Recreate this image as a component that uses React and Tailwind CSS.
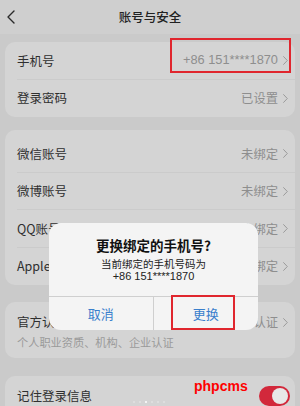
const font = { fontFamily: '"Noto Sans CJK SC", "Noto Sans", sans-serif' };

function Chevron({ className = 'w-[5px] h-[9px]', color = '#9a9a9a' }) {
  return (
    <svg viewBox="0 0 5 9" className={className} fill="none">
      <path d="M0.6 0.6 L4.3 4.5 L0.6 8.4" stroke={color} strokeWidth="1" strokeLinecap="round" strokeLinejoin="round" />
    </svg>
  );
}

function Row({ label, value, last, digits }) {
  return (
    <div className="relative h-[37.5px] flex items-center pl-[12px] pr-[7px]">
      <span className="flex-1 text-[12.5px] text-[#2f2f2f] leading-none">{label}</span>
      <span
        className={`${digits ? 'text-[12.8px]' : 'text-[12.3px]'} text-[#8e8e8e] leading-none mr-[5px]`}
        style={digits ? { fontFamily: '"Liberation Sans", Arial, sans-serif' } : undefined}
      >
        {value}
      </span>
      <Chevron />
      {!last && <div className="absolute left-[12px] right-0 bottom-0 h-px bg-[#cbcbcb]" />}
    </div>
  );
}

export default function App() {
  return (
    <div className="relative w-[300px] h-[406px] overflow-hidden bg-[#cacaca]" style={font}>
      {/* header */}
      <div className="h-[34px] grid grid-cols-[40px_1fr_40px] items-center bg-[#cfcfcf]">
        <div className="pl-[7px] flex items-center">
          <svg viewBox="0 0 8 14" className="w-[8px] h-[14px]" fill="none">
            <path d="M7 1 L1 7 L7 13" stroke="#2a2a2a" strokeWidth="1.4" strokeLinecap="round" strokeLinejoin="round" />
          </svg>
        </div>
        <div className="text-center text-[12.5px] font-medium text-[#222]">账号与安全</div>
        <div />
      </div>

      {/* card 1 */}
      <div className="mt-[8px] mx-[5px] rounded-[10px] bg-[#d4d4d4]">
        <Row label="手机号" value="+86 151****1870" digits />
        <Row label="登录密码" value="已设置" last />
      </div>

      {/* card 2 */}
      <div className="mt-[13px] mx-[5px] rounded-[10px] bg-[#d4d4d4] pt-[5px]">
        <Row label="微信账号" value="未绑定" />
        <Row label="微博账号" value="未绑定" />
        <Row label="QQ账号" value="未绑定" />
        <Row label="Apple ID" value="未绑定" last />
      </div>

      {/* card 3 */}
      <div className="mt-[17px] mx-[5px] rounded-[10px] bg-[#d4d4d4] pt-[10px] pb-[7px] pl-[12px] pr-[7px]">
        <div className="h-[20px] flex items-center">
          <span className="flex-1 text-[12.5px] text-[#2f2f2f] leading-none">官方认证</span>
          <span className="text-[12.3px] text-[#8e8e8e] leading-none mr-[5px]">未认证</span>
          <Chevron />
        </div>
        <div className="mt-[3px] h-[16px] flex items-center text-[11.2px] text-[#9a9a9a] leading-none">
          个人职业资质、机构、企业认证
        </div>
      </div>

      {/* card 4 */}
      <div className="mt-[18px] mx-[5px] rounded-[10px] bg-[#d4d4d4] h-[40px] flex items-start pt-[10px] pl-[12px] pr-[5px]">
        <span className="flex-1 text-[12.5px] text-[#2f2f2f] leading-[20px]">记住登录信息</span>
        <div className="w-[31px] h-[20px] rounded-full bg-[#d2283b] flex items-center justify-end pr-[2px]">
          <div className="w-[16px] h-[16px] rounded-full bg-[#e8e8e8]" />
        </div>
      </div>

      {/* page dots */}
      <div className="absolute left-[133px] top-[401px] flex gap-[4px]">
        <div className="w-[2px] h-[2px] rounded-full bg-[#e2e2e2]" />
        <div className="w-[2px] h-[2px] rounded-full bg-[#e2e2e2]" />
        <div className="w-[2px] h-[2px] rounded-full bg-[#ffffff]" />
        <div className="w-[2px] h-[2px] rounded-full bg-[#e2e2e2]" />
        <div className="w-[2px] h-[2px] rounded-full bg-[#e2e2e2]" />
        <div className="w-[2px] h-[2px] rounded-full bg-[#e2e2e2]" />
      </div>

      {/* watermark */}
      <div
        className="absolute left-[194px] top-[379px] text-[14px] font-bold text-[#ff0000] leading-none"
        style={{ fontFamily: '"Liberation Sans", Arial, sans-serif' }}
      >
        phpcms
      </div>

      {/* dialog */}
      <div className="absolute left-[49px] top-[223px] w-[209px] h-[107px] rounded-[12px] bg-[#f4f4f4] flex flex-col overflow-hidden">
        <div className="h-[73px] flex flex-col items-center pt-[12px]">
          <div className="text-[13.5px] font-bold text-[#111] leading-[20px]">更换绑定的手机号?</div>
          <div className="mt-[2px] text-[10.5px] text-[#222] leading-[13px]">当前绑定的手机号码为</div>
          <div className="text-[11px] text-[#222] leading-[13px]" style={{ fontFamily: '"Liberation Sans", Arial, sans-serif' }}>
            +86 151****1870
          </div>
        </div>
        <div className="h-px bg-[#cfcfcf]" />
        <div className="flex-1 grid grid-cols-2">
          <div className="flex items-center justify-center text-[13px] text-[#3a7fcc] border-r border-[#cfcfcf]">取消</div>
          <div className="flex items-center justify-center text-[13px] text-[#3a7fcc]">更换</div>
        </div>
      </div>

      {/* highlight boxes */}
      <div className="absolute left-[170px] top-[38px] w-[121px] h-[35px] border-2 border-[#e0262e]" />
      <div className="absolute left-[171px] top-[295px] w-[64px] h-[35px] border-2 border-[#e0262e]" />
    </div>
  );
}
